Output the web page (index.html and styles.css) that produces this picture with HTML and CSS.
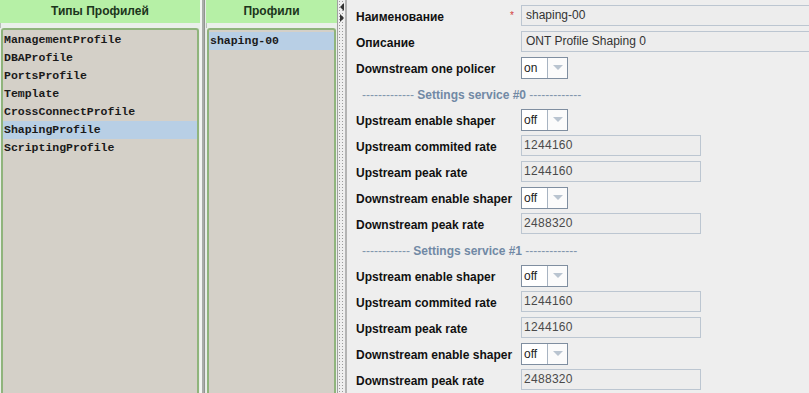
FILE: index.html
```html
<!DOCTYPE html>
<html>
	<head>
		<meta charset="utf-8"/>
		<title>Профили</title>
		<link rel="stylesheet" href="styles.css">
	</head>
	<body>
		<div class="app">
			<div class="panel panel-types">
				<div class="panel-head">Типы Профилей</div>
				<div class="panel-strip"></div>
				<ul class="panel-list">
					<li>ManagementProfile</li>
					<li>DBAProfile</li>
					<li>PortsProfile</li>
					<li>Template</li>
					<li>CrossConnectProfile</li>
					<li class="selected">ShapingProfile</li>
					<li>ScriptingProfile</li>
				</ul>
			</div>
			<div class="divider"></div>
			<div class="panel panel-profiles">
				<div class="panel-head">Профили</div>
				<div class="panel-strip"></div>
				<ul class="panel-list">
					<li class="selected">shaping-00</li>
				</ul>
			</div>
			<div class="splitter">
				<span class="arrow arrow-left"></span>
				<span class="arrow arrow-right"></span>
			</div>
			<div class="form">
				<div class="row">
					<span class="label">Наименование</span><span class="req">*</span>
					<span class="field field-wide">shaping-00</span>
				</div>
				<div class="row">
					<span class="label">Описание</span>
					<span class="field field-wide">ONT Profile Shaping 0</span>
				</div>
				<div class="row">
					<span class="label">Downstream one policer</span>
					<span class="combo"><span class="combo-val">on</span><span class="combo-btn"></span></span>
				</div>
				<div class="row sep"><span>------------- <b>Settings service #0</b> -------------</span></div>
				<div class="row">
					<span class="label">Upstream enable shaper</span>
					<span class="combo"><span class="combo-val">off</span><span class="combo-btn"></span></span>
				</div>
				<div class="row">
					<span class="label">Upstream commited rate</span>
					<span class="field field-num">1244160</span>
				</div>
				<div class="row">
					<span class="label">Upstream peak rate</span>
					<span class="field field-num">1244160</span>
				</div>
				<div class="row">
					<span class="label">Downstream enable shaper</span>
					<span class="combo"><span class="combo-val">off</span><span class="combo-btn"></span></span>
				</div>
				<div class="row">
					<span class="label">Downstream peak rate</span>
					<span class="field field-num">2488320</span>
				</div>
				<div class="row sep"><span>------------ <b>Settings service #1</b> -------------</span></div>
				<div class="row">
					<span class="label">Upstream enable shaper</span>
					<span class="combo"><span class="combo-val">off</span><span class="combo-btn"></span></span>
				</div>
				<div class="row">
					<span class="label">Upstream commited rate</span>
					<span class="field field-num">1244160</span>
				</div>
				<div class="row">
					<span class="label">Upstream peak rate</span>
					<span class="field field-num">1244160</span>
				</div>
				<div class="row">
					<span class="label">Downstream enable shaper</span>
					<span class="combo"><span class="combo-val">off</span><span class="combo-btn"></span></span>
				</div>
				<div class="row">
					<span class="label">Downstream peak rate</span>
					<span class="field field-num">2488320</span>
				</div>
			</div>
		</div>
	</body>
</html>
```
FILE: styles.css
```css
body{margin: 0px;font-size: 12px;font-family: 'Liberation Sans', Arial, sans-serif;background: #eeeeee;overflow: hidden;}
.app{display: flex;flex-direction: row;height: 393px;width: 809px;overflow: hidden;}
.panel{display: flex;flex-direction: column;flex-shrink: 0;background: #e9eee9;}
.panel-types{width: 200px;}
.panel-profiles{width: 131px;}
.panel-head{height: 23px;line-height: 23px;background: #b6f0a6;color: #1c351c;font-weight: bold;text-align: center;}
.panel-strip{height: 5px;background: #eaf0ea;border-left: 1px solid #b8c0b8;}
.panel-list{flex: 1;margin: 0 1px 0 1px;padding: 1px 0 0;list-style: none;background: #d4d0c8;border: 2px solid #8fb47c;border-bottom: none;border-radius: 3px 3px 0 0;}
.panel-list li{height: 18px;line-height: 18px;padding-left: 1px;font-family: 'Liberation Mono', 'DejaVu Sans Mono', monospace;font-weight: bold;font-size: 11.5px;color: #1a1a1a;white-space: nowrap;}
.panel-list li.selected{background: #b8cfe5;}
.panel-profiles .panel-list li:first-child{margin-top: 1px;}
.divider{width: 6px;flex-shrink: 0;background: #e6ebe6;border-left: 2px solid #f2f5f2;box-sizing: border-box;box-shadow: inset 2px 0 0 #a9ada9, inset 3px 0 0 #90948f;}
.splitter{width: 10px;flex-shrink: 0;box-sizing: border-box;display: flex;flex-direction: column;align-items: center;padding-top: 3px;gap: 3px;background-color: #eeeeee;background-image: radial-gradient(circle, #9a9a9a 0.6px, transparent 0.9px);background-size: 3px 3px;border-left: 1px solid #a0a0a0;border-right: 2px solid #b4b4b4;}
.arrow{width: 0;height: 0;border-top: 4px solid transparent;border-bottom: 4px solid transparent;}
.arrow-left{border-right: 4px solid #333;}
.arrow-right{border-left: 4px solid #333;}
.form{flex: 1;min-width: 0;padding: 4px 0 0 9px;background: #eeeeee;}
.row{display: flex;flex-direction: row;align-items: center;height: 26px;position: relative;white-space: pre;}
.label{width: 165px;flex-shrink: 0;font-weight: bold;color: #111;}
.req{position: absolute;left: 154px;top: 6px;color: #d23c3c;font-size: 10px;}
.field{box-sizing: border-box;flex-shrink: 0;height: 21px;line-height: 19px;border: 1px solid #bcc6d1;background: #ededed;color: #333;padding-left: 4px;margin-top: -3px;}
.field-wide{width: 320px;}
.field-num{width: 180px;padding-left: 2px;letter-spacing: 0.3px;color: #4a4a4a;}
.combo{display: flex;flex-shrink: 0;box-sizing: border-box;height: 22px;width: 47px;border: 1px solid #7f8ea0;background: #ffffff;margin-top: -3px;}
.combo-val{flex: 1;line-height: 20px;padding-left: 2px;color: #222;}
.combo-btn{width: 19px;border-left: 1px solid #a8b4c2;background: #fbfbfb;display: flex;align-items: center;justify-content: center;}
.combo-btn::after{content: '';width: 0;height: 0;border-left: 5px solid transparent;border-right: 5px solid transparent;border-top: 5px solid #b9c4d0;}
.sep{padding-left: 6px;color: #8296ad;}
.sep b{color: #7189a5;}
```
